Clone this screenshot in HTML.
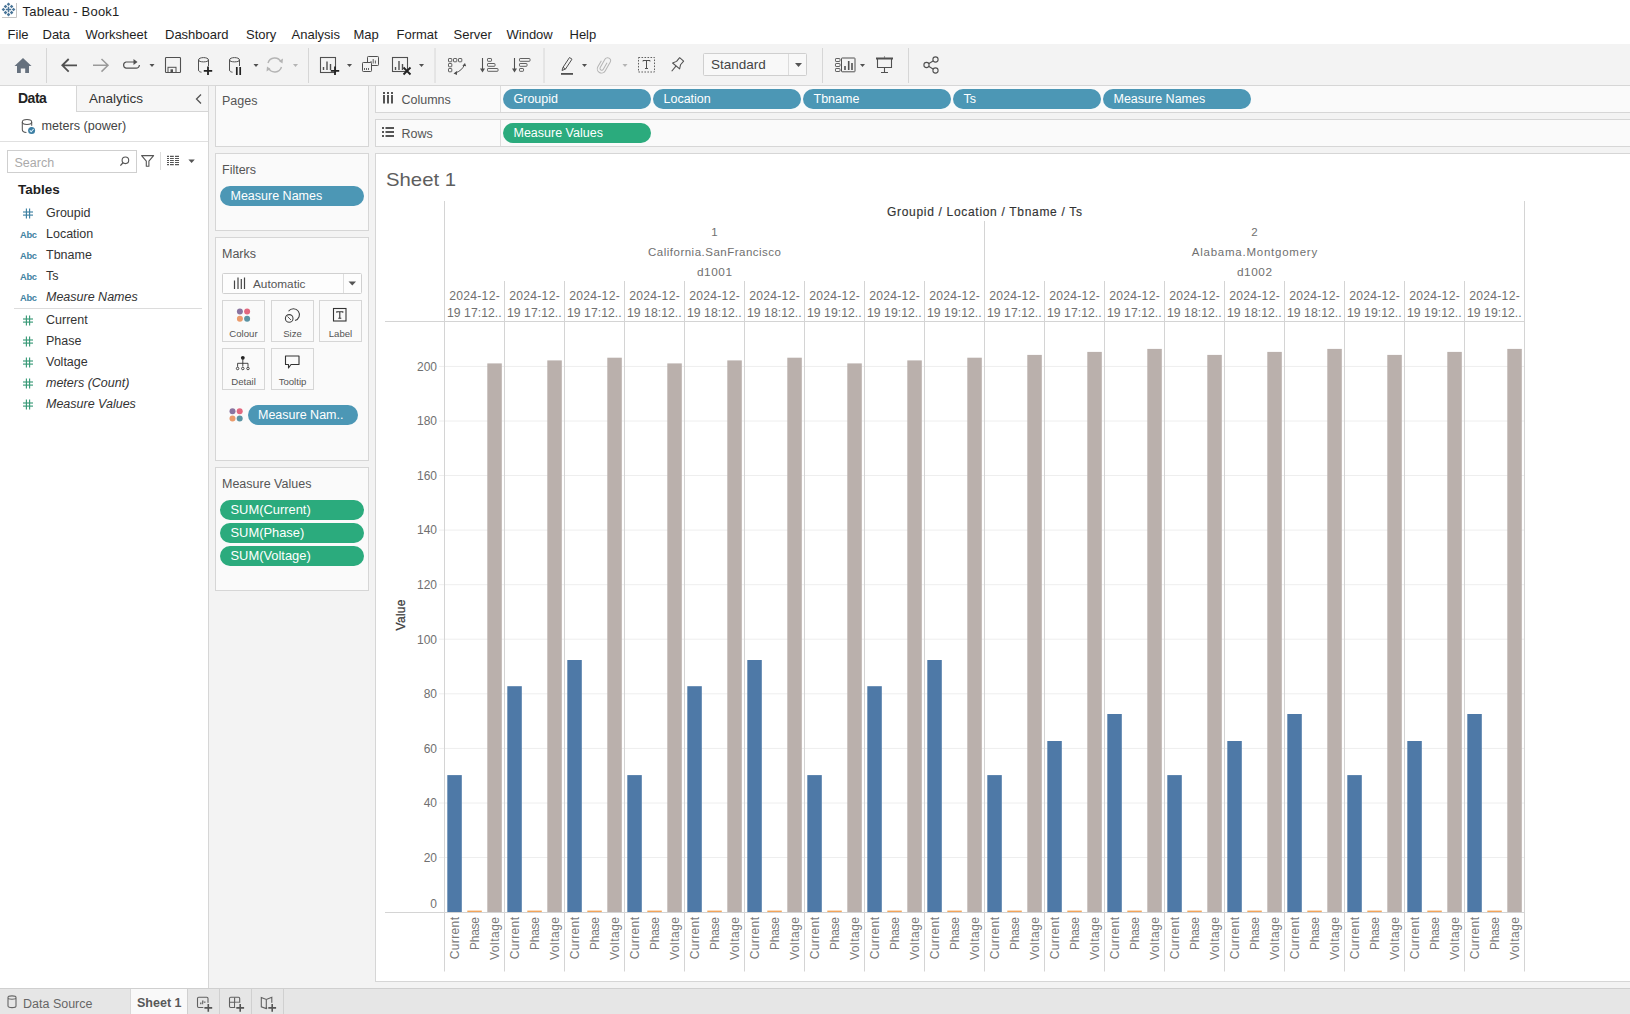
<!DOCTYPE html>
<html><head><meta charset="utf-8"><title>Tableau - Book1</title>
<style>
*{box-sizing:border-box;margin:0;padding:0}
html,body{width:1630px;height:1014px;overflow:hidden;background:#fff;font-family:"Liberation Sans", sans-serif;}
.abs{position:absolute}
.t{position:absolute;white-space:nowrap;line-height:1}
.card{position:absolute;background:#fafafa;border:1px solid #d6d6d6}
.pill{position:absolute;height:20px;border-radius:10px;color:#fff;font-size:12.5px;line-height:20px;padding-left:10.5px;white-space:nowrap;overflow:hidden}
.blue{background:#4c97b5}
.green{background:#2bab7d}
</style></head><body>

<div class="abs" style="left:0;top:0;width:1630px;height:44px;background:#fff"></div>
<svg class="abs" style="left:0;top:0" width="22" height="22" viewBox="0 0 22 22"><path d="M16.5 3 V17.5 H2" fill="none" stroke="#c4c4c4" stroke-width="1"/><path d="M6.7 4.3 L8.5 2.5 L10.3 4.3 L8.5 6.1 Z" fill="#4a7598"/><path d="M3.7 6.5 L5.5 4.7 L7.3 6.5 L5.5 8.3 Z" fill="#4a7598"/><path d="M9.799999999999999 6.5 L11.6 4.7 L13.4 6.5 L11.6 8.3 Z" fill="#4a7598"/><path d="M1.5999999999999999 9.5 L3.4 7.7 L5.2 9.5 L3.4 11.3 Z" fill="#4a7598"/><path d="M11.799999999999999 9.5 L13.6 7.7 L15.4 9.5 L13.6 11.3 Z" fill="#4a7598"/><path d="M3.7 12.6 L5.5 10.799999999999999 L7.3 12.6 L5.5 14.4 Z" fill="#4a7598"/><path d="M9.799999999999999 12.6 L11.6 10.799999999999999 L13.4 12.6 L11.6 14.4 Z" fill="#4a7598"/><path d="M6.7 14.6 L8.5 12.799999999999999 L10.3 14.6 L8.5 16.4 Z" fill="#4a7598"/><path d="M8.5 6.8 V12.2 M5.8 9.5 H11.2" stroke="#4a7598" stroke-width="1.5"/></svg>
<div class="t" style="left:22.5px;top:4.6px;font-size:13px;letter-spacing:0.2px;color:#1e1e1e">Tableau - Book1</div>
<div class="t" style="left:7.6px;top:27.5px;font-size:13px;color:#1e1e1e">File</div>
<div class="t" style="left:42.5px;top:27.5px;font-size:13px;color:#1e1e1e">Data</div>
<div class="t" style="left:85.5px;top:27.5px;font-size:13px;color:#1e1e1e">Worksheet</div>
<div class="t" style="left:165px;top:27.5px;font-size:13px;color:#1e1e1e">Dashboard</div>
<div class="t" style="left:246px;top:27.5px;font-size:13px;color:#1e1e1e">Story</div>
<div class="t" style="left:291.5px;top:27.5px;font-size:13px;color:#1e1e1e">Analysis</div>
<div class="t" style="left:353.5px;top:27.5px;font-size:13px;color:#1e1e1e">Map</div>
<div class="t" style="left:396.5px;top:27.5px;font-size:13px;color:#1e1e1e">Format</div>
<div class="t" style="left:453.6px;top:27.5px;font-size:13px;color:#1e1e1e">Server</div>
<div class="t" style="left:506.5px;top:27.5px;font-size:13px;color:#1e1e1e">Window</div>
<div class="t" style="left:569.5px;top:27.5px;font-size:13px;color:#1e1e1e">Help</div>
<div class="abs" style="left:0;top:44px;width:1630px;height:42px;background:#f3f3f3;border-bottom:1px solid #d8d8d8"></div>
<svg class="abs" style="left:0;top:0" width="1630" height="86" viewBox="0 0 1630 86">
<path d="M14.5 66 L23 58 L31.5 66 H29 V73 H25.2 V68.5 H20.8 V73 H17 V66 Z" fill="#66717e"/>
<line x1="46.5" y1="48" x2="46.5" y2="83" stroke="#d6d6d6" stroke-width="1"/>
<path d="M77 65.3 H62.8 M68.7 59 L62.3 65.3 L68.7 71.6" fill="none" stroke="#505050" stroke-width="1.8"/>
<path d="M93 65.3 H107.5 M101.5 59 L108 65.3 L101.5 71.6" fill="none" stroke="#9a9a9a" stroke-width="1.5"/>
<path d="M134 62 H126 A3.2 3.2 0 0 0 126 68.2 H136 A3.2 3.2 0 0 0 139.4 65" fill="none" stroke="#505050" stroke-width="1.2"/>
<path d="M133.5 59 L137.5 62 L133.5 65 Z" fill="#505050"/>
<path d="M149.5 64 H154.5 L152.0 67 Z" fill="#505050"/>
<rect x="165.5" y="57.5" width="15" height="15" rx="0.8" fill="none" stroke="#505050" stroke-width="1.1"/>
<rect x="168" y="67.3" width="8" height="5.2" fill="none" stroke="#505050" stroke-width="1"/>
<rect x="170.5" y="69.3" width="2.5" height="3" fill="#505050"/>
<path d="M198.5 60 C198.5 56.8 208.5 56.8 208.5 60 C208.5 62.5 198.5 62.5 198.5 60 Z M198.5 60 V70 C198.5 71.5 200.0 72 201.5 72.2 M208.5 60 V66" fill="none" stroke="#505050" stroke-width="1"/>
<path d="M208 66.5 V75 M203.8 70.8 H212.2" stroke="#222" stroke-width="1.8"/>
<path d="M229.5 60 C229.5 56.8 239.5 56.8 239.5 60 C239.5 62.5 229.5 62.5 229.5 60 Z M229.5 60 V70 C229.5 71.5 231.0 72 232.5 72.2 M239.5 60 V66" fill="none" stroke="#505050" stroke-width="1"/>
<path d="M236.8 67 V75 M240.2 67 V75" stroke="#222" stroke-width="1.7"/>
<path d="M253.5 64 H258.5 L256.0 67 Z" fill="#505050"/>
<path d="M268 63 A7 7 0 0 1 281 62 M281.5 67 A7 7 0 0 1 268.5 68" fill="none" stroke="#b4b4b4" stroke-width="1.4"/>
<path d="M279 61 L283 58.5 L282.5 63.5 Z M270.5 69 L266.5 71.5 L267 66.5 Z" fill="#b4b4b4"/>
<path d="M293 64 H298 L295.5 67 Z" fill="#b4b4b4"/>
<line x1="308.5" y1="48" x2="308.5" y2="83" stroke="#d6d6d6" stroke-width="1"/>
<rect x="320.5" y="57.5" width="15" height="15" fill="none" stroke="#505050" stroke-width="1.1"/>
<path d="M323.5 70 V67 M327 70 V61.5 M330.5 70 V64" stroke="#505050" stroke-width="1.4"/>
<path d="M335 66.5 V75 M330.8 70.8 H339.2" stroke="#222" stroke-width="1.8"/>
<path d="M347 64 H352 L349.5 67 Z" fill="#505050"/>
<rect x="367.5" y="56.5" width="11" height="9" rx="0.8" fill="#f3f3f3" stroke="#505050" stroke-width="1"/>
<path d="M371 63.5 V61 M373.2 63.5 V59 M375.4 63.5 V60.5" stroke="#505050" stroke-width="0.9"/>
<rect x="362.5" y="62.5" width="9" height="9" rx="0.8" fill="#f3f3f3" stroke="#505050" stroke-width="1"/>
<path d="M364.5 70 V68 M366.5 70 V68 M368.5 70 V68" stroke="#505050" stroke-width="0.9"/>
<rect x="392.5" y="57.5" width="15" height="14" fill="none" stroke="#505050" stroke-width="1.1"/>
<path d="M395.5 70 V67 M399 70 V61 M402.5 70 V64" stroke="#505050" stroke-width="1.4"/>
<path d="M403.5 67.5 L410.5 74.5 M410.5 67.5 L403.5 74.5" stroke="#222" stroke-width="1.8"/>
<path d="M419 64 H424 L421.5 67 Z" fill="#505050"/>
<line x1="435" y1="48" x2="435" y2="83" stroke="#d6d6d6" stroke-width="1"/>
<rect x="448.5" y="58.5" width="3.3" height="3.3" rx="0.6" fill="none" stroke="#505050" stroke-width="0.9"/>
<rect x="453.5" y="58.5" width="3.3" height="3.3" rx="0.6" fill="none" stroke="#505050" stroke-width="0.9"/>
<rect x="458.5" y="58.5" width="3.3" height="3.3" rx="0.6" fill="none" stroke="#505050" stroke-width="0.9"/>
<rect x="448.5" y="63.5" width="3.3" height="3.3" rx="0.6" fill="none" stroke="#505050" stroke-width="0.9"/>
<rect x="448.5" y="68.5" width="3.3" height="3.3" rx="0.6" fill="none" stroke="#505050" stroke-width="0.9"/>
<path d="M455 73 Q462 71 464.5 64.5" fill="none" stroke="#505050" stroke-width="1"/>
<path d="M453.5 73.5 L457 71 L457 75 Z M465 63 L462.3 65.8 L466.2 66.3 Z" fill="#505050"/>
<path d="M482.5 58 V71" stroke="#505050" stroke-width="1.1"/><path d="M480 68.5 H485 L482.5 72.5 Z" fill="#505050"/>
<rect x="487.5" y="58.5" width="4" height="2.8" rx="0.6" fill="none" stroke="#505050" stroke-width="0.9"/>
<rect x="487.5" y="63.5" width="7.5" height="2.8" rx="0.6" fill="none" stroke="#505050" stroke-width="0.9"/>
<rect x="487.5" y="68.5" width="10.5" height="2.8" rx="0.6" fill="none" stroke="#505050" stroke-width="0.9"/>
<path d="M514.5 58 V71" stroke="#505050" stroke-width="1.1"/><path d="M512 68.5 H517 L514.5 72.5 Z" fill="#505050"/>
<rect x="519.5" y="58.5" width="10.5" height="2.8" rx="0.6" fill="none" stroke="#505050" stroke-width="0.9"/>
<rect x="519.5" y="63.5" width="7.5" height="2.8" rx="0.6" fill="none" stroke="#505050" stroke-width="0.9"/>
<rect x="519.5" y="68.5" width="4" height="2.8" rx="0.6" fill="none" stroke="#505050" stroke-width="0.9"/>
<line x1="544" y1="48" x2="544" y2="83" stroke="#d6d6d6" stroke-width="1"/>
<path d="M569.5 57.5 L572 59.2 L565.5 69 L563 67.3 Z M563 67.3 L562 70.5 L565.5 69" fill="none" stroke="#505050" stroke-width="1"/>
<rect x="561" y="73" width="12" height="1.8" fill="#505050"/>
<path d="M582 64 H587 L584.5 67 Z" fill="#505050"/>
<g transform="translate(604,64.5) rotate(30)"><path d="M1.8 -3 V4.5 A1.8 1.8 0 0 1 -1.8 4.5 V-5 A3 3 0 0 1 4.2 -5 V5 A4.2 4.2 0 0 1 -4.2 5 V-2" fill="none" stroke="#b4b4b4" stroke-width="1"/></g>
<path d="M622.5 64 H627.5 L625.0 67 Z" fill="#b4b4b4"/>
<rect x="638.5" y="57.5" width="16" height="14.5" fill="none" stroke="#505050" stroke-width="0.9" stroke-dasharray="1.6 1.4"/>
<path d="M643 61.5 V60.5 H650 V61.5 M646.5 60.5 V68.5 M645 68.5 H648" fill="none" stroke="#505050" stroke-width="1"/>
<g transform="translate(676.5,65.5) rotate(40)"><path d="M-2.6 -8 H2.6 V-3.2 L4.6 0.6 H-4.6 L-2.6 -3.2 Z" fill="none" stroke="#505050" stroke-width="1.05" stroke-linejoin="round"/><path d="M0 0.6 V7.5" stroke="#505050" stroke-width="1.1"/></g>
<rect x="703.5" y="53.5" width="103" height="22" rx="1" fill="#f8f8f8" stroke="#cfcfcf"/>
<line x1="788.5" y1="54" x2="788.5" y2="75" stroke="#dcdcdc"/>
<path d="M795 63 H802 L798.5 67 Z" fill="#555"/>
<text x="711" y="69" font-family="Liberation Sans, sans-serif" font-size="13.5" fill="#444">Standard</text>
<line x1="822.5" y1="48" x2="822.5" y2="83" stroke="#d6d6d6" stroke-width="1"/>
<rect x="835.5" y="58.5" width="4.5" height="3" rx="0.6" fill="none" stroke="#505050" stroke-width="0.9"/>
<rect x="835.5" y="63.5" width="4.5" height="3" rx="0.6" fill="none" stroke="#505050" stroke-width="0.9"/>
<rect x="835.5" y="68.5" width="4.5" height="3" rx="0.6" fill="none" stroke="#505050" stroke-width="0.9"/>
<rect x="841.5" y="58" width="13.5" height="13.8" rx="0.6" fill="none" stroke="#505050" stroke-width="1"/>
<path d="M845 70 V66 M848.7 70 V61 M852 70 V63" stroke="#505050" stroke-width="1.6"/>
<path d="M860 64 H865 L862.5 67 Z" fill="#505050"/>
<rect x="876" y="57.5" width="17" height="2" fill="#505050"/>
<path d="M877.5 59 V67.5 H891.5 V59 M884.5 56.5 V57.5 M884.5 67.5 V72.5 M881 72.5 H888" fill="none" stroke="#505050" stroke-width="1.1"/>
<line x1="908.5" y1="48" x2="908.5" y2="83" stroke="#d6d6d6" stroke-width="1"/>
<path d="M926.5 65 L935.5 59.5 M926.5 65 L935.5 70.5" stroke="#505050" stroke-width="1.1"/>
<circle cx="935.5" cy="59.5" r="2.6" fill="#f3f3f3" stroke="#505050" stroke-width="1.1"/>
<circle cx="926.5" cy="65" r="2.6" fill="#f3f3f3" stroke="#505050" stroke-width="1.1"/>
<circle cx="935.5" cy="70.5" r="2.6" fill="#f3f3f3" stroke="#505050" stroke-width="1.1"/>
</svg>
<div class="abs" style="left:0;top:86px;width:209px;height:902px;background:#fff;border-right:1px solid #d6d6d6"></div>
<div class="abs" style="left:76px;top:86px;width:132px;height:26px;background:#f6f6f6;border-left:1px solid #d6d6d6;border-bottom:1px solid #d6d6d6"></div>
<div class="t" style="left:18px;top:91.3px;font-size:14px;letter-spacing:-0.5px;font-weight:bold;color:#222">Data</div>
<div class="t" style="left:89px;top:92px;font-size:13.5px;color:#333">Analytics</div>
<svg class="abs" style="left:193.5px;top:92.5px" width="10" height="12"><path d="M7 1.5 L2.5 6 L7 10.5" fill="none" stroke="#555" stroke-width="1.3"/></svg>
<svg class="abs" style="left:15px;top:112px" width="30" height="26" viewBox="15 112 30 26"><ellipse cx="27" cy="121.9" rx="4.7" ry="2.5" fill="none" stroke="#555" stroke-width="1.05"/><path d="M22.3 121.9 V129.6 Q22.3 132.3 26.4 132.6 M31.7 121.9 V125.8" fill="none" stroke="#555" stroke-width="1.05"/><circle cx="31.6" cy="130.4" r="3.5" fill="#3c7ea3"/><path d="M29.8 130.4 L31.2 131.8 L33.6 129" fill="none" stroke="#dff3ff" stroke-width="1.1"/></svg>
<div class="t" style="left:41.5px;top:120px;font-size:12.6px;color:#444">meters (power)</div>
<div class="abs" style="left:0;top:141px;width:208px;height:1px;background:#e0e0e0"></div>
<div class="abs" style="left:7px;top:150px;width:130px;height:22.5px;background:#fff;border:1px solid #cfcfcf"></div>
<div class="t" style="left:14.5px;top:156.5px;font-size:12.5px;color:#aaa">Search</div>
<svg class="abs" style="left:110px;top:148px" width="95" height="27" viewBox="110 148 95 27"><circle cx="125.4" cy="160.3" r="3.3" fill="none" stroke="#555" stroke-width="1.1"/><path d="M123 162.8 L120.4 165.6" stroke="#555" stroke-width="1.3"/><path d="M141.6 155.6 H153.6 L148.9 161.2 V166.3 H146.3 V161.2 Z" fill="none" stroke="#555" stroke-width="1.1" stroke-linejoin="round"/><line x1="160.5" y1="152" x2="160.5" y2="170" stroke="#ddd"/><path d="M167 156.40 H169 M170 156.40 H173.8 M175 156.40 H179" stroke="#555" stroke-width="1.1"/><path d="M167 158.45 H169 M170 158.45 H173.8 M175 158.45 H179" stroke="#555" stroke-width="1.1"/><path d="M167 160.50 H169 M170 160.50 H173.8 M175 160.50 H179" stroke="#555" stroke-width="1.1"/><path d="M167 162.55 H169 M170 162.55 H173.8 M175 162.55 H179" stroke="#555" stroke-width="1.1"/><path d="M167 164.60 H169 M170 164.60 H173.8 M175 164.60 H179" stroke="#555" stroke-width="1.1"/><path d="M188.4 159.4 H194.8 L191.6 162.9 Z" fill="#555"/></svg>
<div class="t" style="left:18px;top:183px;font-size:13.5px;font-weight:bold;color:#1e1e1e">Tables</div>
<svg class="abs" style="left:22px;top:207.9px" width="12" height="11"><g stroke="#3f82a2" stroke-width="1.15"><line x1="4.4" y1="0.5" x2="4.4" y2="10.5"/><line x1="7.6" y1="0.5" x2="7.6" y2="10.5"/><line x1="1" y1="4" x2="11" y2="4"/><line x1="1" y1="7.1" x2="11" y2="7.1"/></g></svg>
<div class="t" style="left:46px;top:206.9px;font-size:12.5px;color:#333;">Groupid</div>
<div class="t" style="left:20px;top:231.1px;font-size:9.3px;letter-spacing:-0.3px;font-weight:bold;color:#3f82a2">Abc</div>
<div class="t" style="left:46px;top:228.1px;font-size:12.5px;color:#333;">Location</div>
<div class="t" style="left:20px;top:252.2px;font-size:9.3px;letter-spacing:-0.3px;font-weight:bold;color:#3f82a2">Abc</div>
<div class="t" style="left:46px;top:249.2px;font-size:12.5px;color:#333;">Tbname</div>
<div class="t" style="left:20px;top:273.0px;font-size:9.3px;letter-spacing:-0.3px;font-weight:bold;color:#3f82a2">Abc</div>
<div class="t" style="left:46px;top:270.0px;font-size:12.5px;color:#333;">Ts</div>
<div class="t" style="left:20px;top:294.2px;font-size:9.3px;letter-spacing:-0.3px;font-weight:bold;color:#3f82a2">Abc</div>
<div class="t" style="left:46px;top:291.2px;font-size:12.5px;color:#333;font-style:italic;">Measure Names</div>
<svg class="abs" style="left:22px;top:315.2px" width="12" height="11"><g stroke="#3a9a78" stroke-width="1.15"><line x1="4.4" y1="0.5" x2="4.4" y2="10.5"/><line x1="7.6" y1="0.5" x2="7.6" y2="10.5"/><line x1="1" y1="4" x2="11" y2="4"/><line x1="1" y1="7.1" x2="11" y2="7.1"/></g></svg>
<div class="t" style="left:46px;top:314.2px;font-size:12.5px;color:#333;">Current</div>
<svg class="abs" style="left:22px;top:336.2px" width="12" height="11"><g stroke="#3a9a78" stroke-width="1.15"><line x1="4.4" y1="0.5" x2="4.4" y2="10.5"/><line x1="7.6" y1="0.5" x2="7.6" y2="10.5"/><line x1="1" y1="4" x2="11" y2="4"/><line x1="1" y1="7.1" x2="11" y2="7.1"/></g></svg>
<div class="t" style="left:46px;top:335.2px;font-size:12.5px;color:#333;">Phase</div>
<svg class="abs" style="left:22px;top:357.2px" width="12" height="11"><g stroke="#3a9a78" stroke-width="1.15"><line x1="4.4" y1="0.5" x2="4.4" y2="10.5"/><line x1="7.6" y1="0.5" x2="7.6" y2="10.5"/><line x1="1" y1="4" x2="11" y2="4"/><line x1="1" y1="7.1" x2="11" y2="7.1"/></g></svg>
<div class="t" style="left:46px;top:356.2px;font-size:12.5px;color:#333;">Voltage</div>
<svg class="abs" style="left:22px;top:378.2px" width="12" height="11"><g stroke="#3a9a78" stroke-width="1.15"><line x1="4.4" y1="0.5" x2="4.4" y2="10.5"/><line x1="7.6" y1="0.5" x2="7.6" y2="10.5"/><line x1="1" y1="4" x2="11" y2="4"/><line x1="1" y1="7.1" x2="11" y2="7.1"/></g></svg>
<div class="t" style="left:46px;top:377.2px;font-size:12.5px;color:#333;font-style:italic;">meters (Count)</div>
<svg class="abs" style="left:22px;top:399.2px" width="12" height="11"><g stroke="#3a9a78" stroke-width="1.15"><line x1="4.4" y1="0.5" x2="4.4" y2="10.5"/><line x1="7.6" y1="0.5" x2="7.6" y2="10.5"/><line x1="1" y1="4" x2="11" y2="4"/><line x1="1" y1="7.1" x2="11" y2="7.1"/></g></svg>
<div class="t" style="left:46px;top:398.2px;font-size:12.5px;color:#333;font-style:italic;">Measure Values</div>
<div class="abs" style="left:14px;top:308px;width:188px;height:1px;background:#dcdcdc"></div>
<div class="abs" style="left:209px;top:86px;width:1421px;height:902px;background:#f3f3f3"></div>
<div class="card" style="left:215px;top:85px;width:154px;height:62px"></div>
<div class="t" style="left:222px;top:95px;font-size:12.5px;color:#555">Pages</div>
<div class="card" style="left:215px;top:153px;width:154px;height:78px"></div>
<div class="t" style="left:222px;top:164px;font-size:12.5px;color:#555">Filters</div>
<div class="pill blue" style="left:220px;top:186px;width:144px">Measure Names</div>
<div class="card" style="left:215px;top:237px;width:154px;height:224px"></div>
<div class="t" style="left:222px;top:248px;font-size:12.5px;color:#555">Marks</div>
<div class="card" style="left:215px;top:467px;width:154px;height:124px"></div>
<div class="t" style="left:222px;top:477.7px;font-size:12.5px;color:#555">Measure Values</div>
<div class="pill green" style="left:220px;top:500px;width:144px;font-size:12.9px">SUM(Current)</div>
<div class="pill green" style="left:220px;top:523px;width:144px;font-size:12.9px">SUM(Phase)</div>
<div class="pill green" style="left:220px;top:546px;width:144px;font-size:12.9px">SUM(Voltage)</div>
<svg class="abs" style="left:0;top:0" width="380" height="600" viewBox="0 0 380 600">
<rect x="222.5" y="273.5" width="139" height="20" rx="1" fill="#fdfdfd" stroke="#d0d0d0"/>
<line x1="343.5" y1="274" x2="343.5" y2="293" stroke="#dedede"/>
<path d="M348.5 281.5 H356 L352.25 285.5 Z" fill="#555"/>
<path d="M234.5 280.5 V289 M238 277.5 V289 M241.3 279 V289 M244.5 277.5 V289" stroke="#444" stroke-width="1.2"/>
<text x="253" y="288" font-family="Liberation Sans, sans-serif" font-size="11.8" fill="#555">Automatic</text>
<rect x="222.5" y="300.5" width="42" height="41" fill="#fafafa" stroke="#d6d6d6"/>
<text x="243.5" y="336.5" font-family="Liberation Sans, sans-serif" font-size="9.6" fill="#555" text-anchor="middle">Colour</text>
<rect x="271.5" y="300.5" width="42" height="41" fill="#fafafa" stroke="#d6d6d6"/>
<text x="292.5" y="336.5" font-family="Liberation Sans, sans-serif" font-size="9.6" fill="#555" text-anchor="middle">Size</text>
<rect x="319.5" y="300.5" width="42" height="41" fill="#fafafa" stroke="#d6d6d6"/>
<text x="340.5" y="336.5" font-family="Liberation Sans, sans-serif" font-size="9.6" fill="#555" text-anchor="middle">Label</text>
<rect x="222.5" y="348.5" width="42" height="41" fill="#fafafa" stroke="#d6d6d6"/>
<text x="243.5" y="384.5" font-family="Liberation Sans, sans-serif" font-size="9.6" fill="#555" text-anchor="middle">Detail</text>
<rect x="271.5" y="348.5" width="42" height="41" fill="#fafafa" stroke="#d6d6d6"/>
<text x="292.5" y="384.5" font-family="Liberation Sans, sans-serif" font-size="9.6" fill="#555" text-anchor="middle">Tooltip</text>
<circle cx="239.9" cy="311.59999999999997" r="3" fill="#8a74a0"/><circle cx="247.1" cy="311.59999999999997" r="3" fill="#e2687f"/>
<circle cx="239.9" cy="318.8" r="3" fill="#eb9b6c"/><circle cx="247.1" cy="318.8" r="3" fill="#5a93a3"/>
<path d="M288.5 311.3 A6 6 0 1 1 295 320.5" fill="none" stroke="#444" stroke-width="1.1"/>
<circle cx="289.2" cy="318.4" r="3.8" fill="none" stroke="#444" stroke-width="1.1"/><path d="M287.5 316.5 L291 320" stroke="#444" stroke-width="0.9"/>
<rect x="333.5" y="308.5" width="12.5" height="12.5" fill="none" stroke="#333" stroke-width="1.1"/>
<path d="M336.8 312.7 V311.8 H342.8 V312.7 M339.8 311.8 V318.2 M338.3 318.2 H341.3" fill="none" stroke="#333" stroke-width="1.1"/>
<circle cx="242.8" cy="357.8" r="1.9" fill="#222"/>
<path d="M242.8 358 V366.5 M237.6 366.8 V363.3 H248 V366.8" fill="none" stroke="#333" stroke-width="0.9"/>
<circle cx="237.6" cy="368.5" r="1.25" fill="none" stroke="#333" stroke-width="0.9"/>
<circle cx="242.8" cy="368.5" r="1.25" fill="none" stroke="#333" stroke-width="0.9"/>
<circle cx="248" cy="368.5" r="1.25" fill="none" stroke="#333" stroke-width="0.9"/>
<path d="M285.5 356 H299 V364.5 H291 L288.5 368 V364.5 H285.5 Z" fill="none" stroke="#333" stroke-width="1.1" stroke-linejoin="round"/>
<circle cx="232.5" cy="411.29999999999995" r="3" fill="#8a74a0"/><circle cx="239.7" cy="411.29999999999995" r="3" fill="#e2687f"/>
<circle cx="232.5" cy="418.5" r="3" fill="#eb9b6c"/><circle cx="239.7" cy="418.5" r="3" fill="#5a93a3"/>
</svg>
<div class="pill blue" style="left:247.5px;top:405px;width:110.5px">Measure Nam..</div>
<div class="card" style="left:375px;top:85px;width:1260px;height:28px;background:#fafafa"></div>
<div class="abs" style="left:500px;top:86px;width:1px;height:26px;background:#dcdcdc"></div>
<div class="t" style="left:401.5px;top:93.6px;font-size:12.5px;color:#555">Columns</div>
<div class="card" style="left:375px;top:119px;width:1260px;height:28px;background:#fafafa"></div>
<div class="abs" style="left:500px;top:120px;width:1px;height:26px;background:#dcdcdc"></div>
<div class="t" style="left:401.5px;top:128px;font-size:12.5px;color:#555">Rows</div>
<div class="pill blue" style="left:503px;top:89px;width:148px">Groupid</div>
<div class="pill blue" style="left:653px;top:89px;width:148px">Location</div>
<div class="pill blue" style="left:803px;top:89px;width:148px">Tbname</div>
<div class="pill blue" style="left:953px;top:89px;width:148px">Ts</div>
<div class="pill blue" style="left:1103px;top:89px;width:148px">Measure Names</div>
<div class="pill green" style="left:503px;top:123px;width:148px">Measure Values</div>
<svg class="abs" style="left:380px;top:90px" width="16" height="50"><g fill="#555"><rect x="3" y="5" width="2" height="8.5"/><rect x="7" y="5" width="2" height="8.5"/><rect x="11" y="5" width="2" height="8.5"/><rect x="3" y="2" width="2" height="2"/><rect x="7" y="2" width="2" height="2"/><rect x="11" y="2" width="2" height="2"/></g><g fill="#555"><rect x="2" y="37" width="2" height="2"/><rect x="2" y="41" width="2" height="2"/><rect x="2" y="45" width="2" height="2"/><rect x="5.5" y="37" width="8.5" height="2"/><rect x="5.5" y="41" width="8.5" height="2"/><rect x="5.5" y="45" width="8.5" height="2"/></g></svg>
<div class="abs" style="left:375px;top:153px;width:1260px;height:829px;background:#fff;border:1px solid #d6d6d6"></div>
<div class="abs" style="left:376px;top:982px;width:1254px;height:6px;background:#f3f3f3"></div>
<svg class="abs" style="left:0;top:0" width="1630" height="1014" viewBox="0 0 1630 1014">
<g font-family="Liberation Sans, sans-serif">
<text x="386" y="186" font-size="19" fill="#5e5e5e" textLength="70" lengthAdjust="spacingAndGlyphs">Sheet 1</text>
<line x1="439" y1="857.5" x2="1524.5" y2="857.5" stroke="#eeeeee" stroke-width="1"/>
<line x1="439" y1="803.0" x2="1524.5" y2="803.0" stroke="#eeeeee" stroke-width="1"/>
<line x1="439" y1="748.4" x2="1524.5" y2="748.4" stroke="#eeeeee" stroke-width="1"/>
<line x1="439" y1="693.8" x2="1524.5" y2="693.8" stroke="#eeeeee" stroke-width="1"/>
<line x1="439" y1="639.2" x2="1524.5" y2="639.2" stroke="#eeeeee" stroke-width="1"/>
<line x1="439" y1="584.7" x2="1524.5" y2="584.7" stroke="#eeeeee" stroke-width="1"/>
<line x1="439" y1="530.1" x2="1524.5" y2="530.1" stroke="#eeeeee" stroke-width="1"/>
<line x1="439" y1="475.5" x2="1524.5" y2="475.5" stroke="#eeeeee" stroke-width="1"/>
<line x1="439" y1="421.0" x2="1524.5" y2="421.0" stroke="#eeeeee" stroke-width="1"/>
<line x1="439" y1="366.4" x2="1524.5" y2="366.4" stroke="#eeeeee" stroke-width="1"/>
<rect x="447.3" y="775.1" width="14.5" height="137.0" fill="#4e79a7"/>
<rect x="467.3" y="910.6" width="14.5" height="1.5" fill="#f3a55a"/>
<rect x="487.3" y="363.4" width="14.5" height="548.7" fill="#bab0ac"/>
<rect x="507.3" y="686.2" width="14.5" height="225.9" fill="#4e79a7"/>
<rect x="527.3" y="910.6" width="14.5" height="1.5" fill="#f3a55a"/>
<rect x="547.3" y="360.4" width="14.5" height="551.7" fill="#bab0ac"/>
<rect x="567.3" y="660.0" width="14.5" height="252.1" fill="#4e79a7"/>
<rect x="587.3" y="910.6" width="14.5" height="1.5" fill="#f3a55a"/>
<rect x="607.3" y="357.7" width="14.5" height="554.4" fill="#bab0ac"/>
<rect x="627.3" y="775.1" width="14.5" height="137.0" fill="#4e79a7"/>
<rect x="647.3" y="910.6" width="14.5" height="1.5" fill="#f3a55a"/>
<rect x="667.3" y="363.4" width="14.5" height="548.7" fill="#bab0ac"/>
<rect x="687.3" y="686.2" width="14.5" height="225.9" fill="#4e79a7"/>
<rect x="707.3" y="910.6" width="14.5" height="1.5" fill="#f3a55a"/>
<rect x="727.3" y="360.4" width="14.5" height="551.7" fill="#bab0ac"/>
<rect x="747.3" y="660.0" width="14.5" height="252.1" fill="#4e79a7"/>
<rect x="767.3" y="910.6" width="14.5" height="1.5" fill="#f3a55a"/>
<rect x="787.3" y="357.7" width="14.5" height="554.4" fill="#bab0ac"/>
<rect x="807.3" y="775.1" width="14.5" height="137.0" fill="#4e79a7"/>
<rect x="827.3" y="910.6" width="14.5" height="1.5" fill="#f3a55a"/>
<rect x="847.3" y="363.4" width="14.5" height="548.7" fill="#bab0ac"/>
<rect x="867.3" y="686.2" width="14.5" height="225.9" fill="#4e79a7"/>
<rect x="887.3" y="910.6" width="14.5" height="1.5" fill="#f3a55a"/>
<rect x="907.3" y="360.4" width="14.5" height="551.7" fill="#bab0ac"/>
<rect x="927.3" y="660.0" width="14.5" height="252.1" fill="#4e79a7"/>
<rect x="947.3" y="910.6" width="14.5" height="1.5" fill="#f3a55a"/>
<rect x="967.3" y="357.7" width="14.5" height="554.4" fill="#bab0ac"/>
<rect x="987.3" y="775.1" width="14.5" height="137.0" fill="#4e79a7"/>
<rect x="1007.3" y="910.6" width="14.5" height="1.5" fill="#f3a55a"/>
<rect x="1027.3" y="354.9" width="14.5" height="557.2" fill="#bab0ac"/>
<rect x="1047.3" y="741.0" width="14.5" height="171.1" fill="#4e79a7"/>
<rect x="1067.3" y="910.6" width="14.5" height="1.5" fill="#f3a55a"/>
<rect x="1087.3" y="351.9" width="14.5" height="560.2" fill="#bab0ac"/>
<rect x="1107.3" y="714.0" width="14.5" height="198.1" fill="#4e79a7"/>
<rect x="1127.3" y="910.6" width="14.5" height="1.5" fill="#f3a55a"/>
<rect x="1147.3" y="348.9" width="14.5" height="563.2" fill="#bab0ac"/>
<rect x="1167.3" y="775.1" width="14.5" height="137.0" fill="#4e79a7"/>
<rect x="1187.3" y="910.6" width="14.5" height="1.5" fill="#f3a55a"/>
<rect x="1207.3" y="354.9" width="14.5" height="557.2" fill="#bab0ac"/>
<rect x="1227.3" y="741.0" width="14.5" height="171.1" fill="#4e79a7"/>
<rect x="1247.3" y="910.6" width="14.5" height="1.5" fill="#f3a55a"/>
<rect x="1267.3" y="351.9" width="14.5" height="560.2" fill="#bab0ac"/>
<rect x="1287.3" y="714.0" width="14.5" height="198.1" fill="#4e79a7"/>
<rect x="1307.3" y="910.6" width="14.5" height="1.5" fill="#f3a55a"/>
<rect x="1327.3" y="348.9" width="14.5" height="563.2" fill="#bab0ac"/>
<rect x="1347.3" y="775.1" width="14.5" height="137.0" fill="#4e79a7"/>
<rect x="1367.3" y="910.6" width="14.5" height="1.5" fill="#f3a55a"/>
<rect x="1387.3" y="354.9" width="14.5" height="557.2" fill="#bab0ac"/>
<rect x="1407.3" y="741.0" width="14.5" height="171.1" fill="#4e79a7"/>
<rect x="1427.3" y="910.6" width="14.5" height="1.5" fill="#f3a55a"/>
<rect x="1447.3" y="351.9" width="14.5" height="560.2" fill="#bab0ac"/>
<rect x="1467.3" y="714.0" width="14.5" height="198.1" fill="#4e79a7"/>
<rect x="1487.3" y="910.6" width="14.5" height="1.5" fill="#f3a55a"/>
<rect x="1507.3" y="348.9" width="14.5" height="563.2" fill="#bab0ac"/>
<line x1="444.5" y1="201" x2="444.5" y2="971.5" stroke="#d4d4d4" stroke-width="1"/>
<line x1="504.5" y1="281" x2="504.5" y2="971.5" stroke="#d4d4d4" stroke-width="1"/>
<line x1="564.5" y1="281" x2="564.5" y2="971.5" stroke="#d4d4d4" stroke-width="1"/>
<line x1="624.5" y1="281" x2="624.5" y2="971.5" stroke="#d4d4d4" stroke-width="1"/>
<line x1="684.5" y1="281" x2="684.5" y2="971.5" stroke="#d4d4d4" stroke-width="1"/>
<line x1="744.5" y1="281" x2="744.5" y2="971.5" stroke="#d4d4d4" stroke-width="1"/>
<line x1="804.5" y1="281" x2="804.5" y2="971.5" stroke="#d4d4d4" stroke-width="1"/>
<line x1="864.5" y1="281" x2="864.5" y2="971.5" stroke="#d4d4d4" stroke-width="1"/>
<line x1="924.5" y1="281" x2="924.5" y2="971.5" stroke="#d4d4d4" stroke-width="1"/>
<line x1="984.5" y1="221" x2="984.5" y2="971.5" stroke="#d4d4d4" stroke-width="1"/>
<line x1="1044.5" y1="281" x2="1044.5" y2="971.5" stroke="#d4d4d4" stroke-width="1"/>
<line x1="1104.5" y1="281" x2="1104.5" y2="971.5" stroke="#d4d4d4" stroke-width="1"/>
<line x1="1164.5" y1="281" x2="1164.5" y2="971.5" stroke="#d4d4d4" stroke-width="1"/>
<line x1="1224.5" y1="281" x2="1224.5" y2="971.5" stroke="#d4d4d4" stroke-width="1"/>
<line x1="1284.5" y1="281" x2="1284.5" y2="971.5" stroke="#d4d4d4" stroke-width="1"/>
<line x1="1344.5" y1="281" x2="1344.5" y2="971.5" stroke="#d4d4d4" stroke-width="1"/>
<line x1="1404.5" y1="281" x2="1404.5" y2="971.5" stroke="#d4d4d4" stroke-width="1"/>
<line x1="1464.5" y1="281" x2="1464.5" y2="971.5" stroke="#d4d4d4" stroke-width="1"/>
<line x1="1524.5" y1="201" x2="1524.5" y2="971.5" stroke="#d4d4d4" stroke-width="1"/>
<line x1="385" y1="321.5" x2="1524.5" y2="321.5" stroke="#d4d4d4" stroke-width="1"/>
<line x1="385" y1="912.5" x2="1524.5" y2="912.5" stroke="#d4d4d4" stroke-width="1"/>
<text x="437" y="907.7" font-size="12" fill="#707070" text-anchor="end">0</text>
<text x="437" y="861.7" font-size="12" fill="#707070" text-anchor="end">20</text>
<text x="437" y="807.2" font-size="12" fill="#707070" text-anchor="end">40</text>
<text x="437" y="752.6" font-size="12" fill="#707070" text-anchor="end">60</text>
<text x="437" y="698.0" font-size="12" fill="#707070" text-anchor="end">80</text>
<text x="437" y="643.5" font-size="12" fill="#707070" text-anchor="end">100</text>
<text x="437" y="588.9" font-size="12" fill="#707070" text-anchor="end">120</text>
<text x="437" y="534.3" font-size="12" fill="#707070" text-anchor="end">140</text>
<text x="437" y="479.7" font-size="12" fill="#707070" text-anchor="end">160</text>
<text x="437" y="425.2" font-size="12" fill="#707070" text-anchor="end">180</text>
<text x="437" y="370.6" font-size="12" fill="#707070" text-anchor="end">200</text>
<text transform="translate(405.4,615) rotate(-90)" font-size="12" fill="#3a3a3a" stroke="#3a3a3a" stroke-width="0.25" text-anchor="middle" textLength="31" lengthAdjust="spacing">Value</text>
<text x="984.5" y="216" font-size="12" fill="#333" stroke="#333" stroke-width="0.15" text-anchor="middle" textLength="195" lengthAdjust="spacing">Groupid / Location / Tbname / Ts</text>
<text x="714.5" y="236" font-size="11.5" fill="#707070" text-anchor="middle">1</text>
<text x="714.5" y="256" font-size="11.5" fill="#707070" text-anchor="middle" textLength="133" lengthAdjust="spacing">California.SanFrancisco</text>
<text x="714.5" y="276" font-size="11.8" fill="#707070" text-anchor="middle" textLength="35" lengthAdjust="spacing">d1001</text>
<text x="1254.5" y="236" font-size="11.5" fill="#707070" text-anchor="middle">2</text>
<text x="1254.5" y="256" font-size="11.5" fill="#707070" text-anchor="middle" textLength="125.3" lengthAdjust="spacing">Alabama.Montgomery</text>
<text x="1254.5" y="276" font-size="11.8" fill="#707070" text-anchor="middle" textLength="35" lengthAdjust="spacing">d1002</text>
<text x="474.5" y="300.2" font-size="12.2" fill="#707070" text-anchor="middle" textLength="50.4" lengthAdjust="spacing">2024-12-</text>
<text x="474.3" y="316.8" font-size="12.2" fill="#707070" text-anchor="middle" textLength="54.8" lengthAdjust="spacing">19 17:12..</text>
<text x="534.5" y="300.2" font-size="12.2" fill="#707070" text-anchor="middle" textLength="50.4" lengthAdjust="spacing">2024-12-</text>
<text x="534.3" y="316.8" font-size="12.2" fill="#707070" text-anchor="middle" textLength="54.8" lengthAdjust="spacing">19 17:12..</text>
<text x="594.5" y="300.2" font-size="12.2" fill="#707070" text-anchor="middle" textLength="50.4" lengthAdjust="spacing">2024-12-</text>
<text x="594.3" y="316.8" font-size="12.2" fill="#707070" text-anchor="middle" textLength="54.8" lengthAdjust="spacing">19 17:12..</text>
<text x="654.5" y="300.2" font-size="12.2" fill="#707070" text-anchor="middle" textLength="50.4" lengthAdjust="spacing">2024-12-</text>
<text x="654.3" y="316.8" font-size="12.2" fill="#707070" text-anchor="middle" textLength="54.8" lengthAdjust="spacing">19 18:12..</text>
<text x="714.5" y="300.2" font-size="12.2" fill="#707070" text-anchor="middle" textLength="50.4" lengthAdjust="spacing">2024-12-</text>
<text x="714.3" y="316.8" font-size="12.2" fill="#707070" text-anchor="middle" textLength="54.8" lengthAdjust="spacing">19 18:12..</text>
<text x="774.5" y="300.2" font-size="12.2" fill="#707070" text-anchor="middle" textLength="50.4" lengthAdjust="spacing">2024-12-</text>
<text x="774.3" y="316.8" font-size="12.2" fill="#707070" text-anchor="middle" textLength="54.8" lengthAdjust="spacing">19 18:12..</text>
<text x="834.5" y="300.2" font-size="12.2" fill="#707070" text-anchor="middle" textLength="50.4" lengthAdjust="spacing">2024-12-</text>
<text x="834.3" y="316.8" font-size="12.2" fill="#707070" text-anchor="middle" textLength="54.8" lengthAdjust="spacing">19 19:12..</text>
<text x="894.5" y="300.2" font-size="12.2" fill="#707070" text-anchor="middle" textLength="50.4" lengthAdjust="spacing">2024-12-</text>
<text x="894.3" y="316.8" font-size="12.2" fill="#707070" text-anchor="middle" textLength="54.8" lengthAdjust="spacing">19 19:12..</text>
<text x="954.5" y="300.2" font-size="12.2" fill="#707070" text-anchor="middle" textLength="50.4" lengthAdjust="spacing">2024-12-</text>
<text x="954.3" y="316.8" font-size="12.2" fill="#707070" text-anchor="middle" textLength="54.8" lengthAdjust="spacing">19 19:12..</text>
<text x="1014.5" y="300.2" font-size="12.2" fill="#707070" text-anchor="middle" textLength="50.4" lengthAdjust="spacing">2024-12-</text>
<text x="1014.3" y="316.8" font-size="12.2" fill="#707070" text-anchor="middle" textLength="54.8" lengthAdjust="spacing">19 17:12..</text>
<text x="1074.5" y="300.2" font-size="12.2" fill="#707070" text-anchor="middle" textLength="50.4" lengthAdjust="spacing">2024-12-</text>
<text x="1074.3" y="316.8" font-size="12.2" fill="#707070" text-anchor="middle" textLength="54.8" lengthAdjust="spacing">19 17:12..</text>
<text x="1134.5" y="300.2" font-size="12.2" fill="#707070" text-anchor="middle" textLength="50.4" lengthAdjust="spacing">2024-12-</text>
<text x="1134.3" y="316.8" font-size="12.2" fill="#707070" text-anchor="middle" textLength="54.8" lengthAdjust="spacing">19 17:12..</text>
<text x="1194.5" y="300.2" font-size="12.2" fill="#707070" text-anchor="middle" textLength="50.4" lengthAdjust="spacing">2024-12-</text>
<text x="1194.3" y="316.8" font-size="12.2" fill="#707070" text-anchor="middle" textLength="54.8" lengthAdjust="spacing">19 18:12..</text>
<text x="1254.5" y="300.2" font-size="12.2" fill="#707070" text-anchor="middle" textLength="50.4" lengthAdjust="spacing">2024-12-</text>
<text x="1254.3" y="316.8" font-size="12.2" fill="#707070" text-anchor="middle" textLength="54.8" lengthAdjust="spacing">19 18:12..</text>
<text x="1314.5" y="300.2" font-size="12.2" fill="#707070" text-anchor="middle" textLength="50.4" lengthAdjust="spacing">2024-12-</text>
<text x="1314.3" y="316.8" font-size="12.2" fill="#707070" text-anchor="middle" textLength="54.8" lengthAdjust="spacing">19 18:12..</text>
<text x="1374.5" y="300.2" font-size="12.2" fill="#707070" text-anchor="middle" textLength="50.4" lengthAdjust="spacing">2024-12-</text>
<text x="1374.3" y="316.8" font-size="12.2" fill="#707070" text-anchor="middle" textLength="54.8" lengthAdjust="spacing">19 19:12..</text>
<text x="1434.5" y="300.2" font-size="12.2" fill="#707070" text-anchor="middle" textLength="50.4" lengthAdjust="spacing">2024-12-</text>
<text x="1434.3" y="316.8" font-size="12.2" fill="#707070" text-anchor="middle" textLength="54.8" lengthAdjust="spacing">19 19:12..</text>
<text x="1494.5" y="300.2" font-size="12.2" fill="#707070" text-anchor="middle" textLength="50.4" lengthAdjust="spacing">2024-12-</text>
<text x="1494.3" y="316.8" font-size="12.2" fill="#707070" text-anchor="middle" textLength="54.8" lengthAdjust="spacing">19 19:12..</text>
<text transform="translate(459.1,917) rotate(-90)" font-size="12" fill="#777" text-anchor="end" textLength="42.3" lengthAdjust="spacing">Current</text>
<text transform="translate(479.1,917) rotate(-90)" font-size="12" fill="#777" text-anchor="end" textLength="33" lengthAdjust="spacing">Phase</text>
<text transform="translate(499.1,917) rotate(-90)" font-size="12" fill="#777" text-anchor="end" textLength="43" lengthAdjust="spacing">Voltage</text>
<text transform="translate(519.1,917) rotate(-90)" font-size="12" fill="#777" text-anchor="end" textLength="42.3" lengthAdjust="spacing">Current</text>
<text transform="translate(539.1,917) rotate(-90)" font-size="12" fill="#777" text-anchor="end" textLength="33" lengthAdjust="spacing">Phase</text>
<text transform="translate(559.1,917) rotate(-90)" font-size="12" fill="#777" text-anchor="end" textLength="43" lengthAdjust="spacing">Voltage</text>
<text transform="translate(579.1,917) rotate(-90)" font-size="12" fill="#777" text-anchor="end" textLength="42.3" lengthAdjust="spacing">Current</text>
<text transform="translate(599.1,917) rotate(-90)" font-size="12" fill="#777" text-anchor="end" textLength="33" lengthAdjust="spacing">Phase</text>
<text transform="translate(619.1,917) rotate(-90)" font-size="12" fill="#777" text-anchor="end" textLength="43" lengthAdjust="spacing">Voltage</text>
<text transform="translate(639.1,917) rotate(-90)" font-size="12" fill="#777" text-anchor="end" textLength="42.3" lengthAdjust="spacing">Current</text>
<text transform="translate(659.1,917) rotate(-90)" font-size="12" fill="#777" text-anchor="end" textLength="33" lengthAdjust="spacing">Phase</text>
<text transform="translate(679.1,917) rotate(-90)" font-size="12" fill="#777" text-anchor="end" textLength="43" lengthAdjust="spacing">Voltage</text>
<text transform="translate(699.1,917) rotate(-90)" font-size="12" fill="#777" text-anchor="end" textLength="42.3" lengthAdjust="spacing">Current</text>
<text transform="translate(719.1,917) rotate(-90)" font-size="12" fill="#777" text-anchor="end" textLength="33" lengthAdjust="spacing">Phase</text>
<text transform="translate(739.1,917) rotate(-90)" font-size="12" fill="#777" text-anchor="end" textLength="43" lengthAdjust="spacing">Voltage</text>
<text transform="translate(759.1,917) rotate(-90)" font-size="12" fill="#777" text-anchor="end" textLength="42.3" lengthAdjust="spacing">Current</text>
<text transform="translate(779.1,917) rotate(-90)" font-size="12" fill="#777" text-anchor="end" textLength="33" lengthAdjust="spacing">Phase</text>
<text transform="translate(799.1,917) rotate(-90)" font-size="12" fill="#777" text-anchor="end" textLength="43" lengthAdjust="spacing">Voltage</text>
<text transform="translate(819.1,917) rotate(-90)" font-size="12" fill="#777" text-anchor="end" textLength="42.3" lengthAdjust="spacing">Current</text>
<text transform="translate(839.1,917) rotate(-90)" font-size="12" fill="#777" text-anchor="end" textLength="33" lengthAdjust="spacing">Phase</text>
<text transform="translate(859.1,917) rotate(-90)" font-size="12" fill="#777" text-anchor="end" textLength="43" lengthAdjust="spacing">Voltage</text>
<text transform="translate(879.1,917) rotate(-90)" font-size="12" fill="#777" text-anchor="end" textLength="42.3" lengthAdjust="spacing">Current</text>
<text transform="translate(899.1,917) rotate(-90)" font-size="12" fill="#777" text-anchor="end" textLength="33" lengthAdjust="spacing">Phase</text>
<text transform="translate(919.1,917) rotate(-90)" font-size="12" fill="#777" text-anchor="end" textLength="43" lengthAdjust="spacing">Voltage</text>
<text transform="translate(939.1,917) rotate(-90)" font-size="12" fill="#777" text-anchor="end" textLength="42.3" lengthAdjust="spacing">Current</text>
<text transform="translate(959.1,917) rotate(-90)" font-size="12" fill="#777" text-anchor="end" textLength="33" lengthAdjust="spacing">Phase</text>
<text transform="translate(979.1,917) rotate(-90)" font-size="12" fill="#777" text-anchor="end" textLength="43" lengthAdjust="spacing">Voltage</text>
<text transform="translate(999.1,917) rotate(-90)" font-size="12" fill="#777" text-anchor="end" textLength="42.3" lengthAdjust="spacing">Current</text>
<text transform="translate(1019.1,917) rotate(-90)" font-size="12" fill="#777" text-anchor="end" textLength="33" lengthAdjust="spacing">Phase</text>
<text transform="translate(1039.1,917) rotate(-90)" font-size="12" fill="#777" text-anchor="end" textLength="43" lengthAdjust="spacing">Voltage</text>
<text transform="translate(1059.1,917) rotate(-90)" font-size="12" fill="#777" text-anchor="end" textLength="42.3" lengthAdjust="spacing">Current</text>
<text transform="translate(1079.1,917) rotate(-90)" font-size="12" fill="#777" text-anchor="end" textLength="33" lengthAdjust="spacing">Phase</text>
<text transform="translate(1099.1,917) rotate(-90)" font-size="12" fill="#777" text-anchor="end" textLength="43" lengthAdjust="spacing">Voltage</text>
<text transform="translate(1119.1,917) rotate(-90)" font-size="12" fill="#777" text-anchor="end" textLength="42.3" lengthAdjust="spacing">Current</text>
<text transform="translate(1139.1,917) rotate(-90)" font-size="12" fill="#777" text-anchor="end" textLength="33" lengthAdjust="spacing">Phase</text>
<text transform="translate(1159.1,917) rotate(-90)" font-size="12" fill="#777" text-anchor="end" textLength="43" lengthAdjust="spacing">Voltage</text>
<text transform="translate(1179.1,917) rotate(-90)" font-size="12" fill="#777" text-anchor="end" textLength="42.3" lengthAdjust="spacing">Current</text>
<text transform="translate(1199.1,917) rotate(-90)" font-size="12" fill="#777" text-anchor="end" textLength="33" lengthAdjust="spacing">Phase</text>
<text transform="translate(1219.1,917) rotate(-90)" font-size="12" fill="#777" text-anchor="end" textLength="43" lengthAdjust="spacing">Voltage</text>
<text transform="translate(1239.1,917) rotate(-90)" font-size="12" fill="#777" text-anchor="end" textLength="42.3" lengthAdjust="spacing">Current</text>
<text transform="translate(1259.1,917) rotate(-90)" font-size="12" fill="#777" text-anchor="end" textLength="33" lengthAdjust="spacing">Phase</text>
<text transform="translate(1279.1,917) rotate(-90)" font-size="12" fill="#777" text-anchor="end" textLength="43" lengthAdjust="spacing">Voltage</text>
<text transform="translate(1299.1,917) rotate(-90)" font-size="12" fill="#777" text-anchor="end" textLength="42.3" lengthAdjust="spacing">Current</text>
<text transform="translate(1319.1,917) rotate(-90)" font-size="12" fill="#777" text-anchor="end" textLength="33" lengthAdjust="spacing">Phase</text>
<text transform="translate(1339.1,917) rotate(-90)" font-size="12" fill="#777" text-anchor="end" textLength="43" lengthAdjust="spacing">Voltage</text>
<text transform="translate(1359.1,917) rotate(-90)" font-size="12" fill="#777" text-anchor="end" textLength="42.3" lengthAdjust="spacing">Current</text>
<text transform="translate(1379.1,917) rotate(-90)" font-size="12" fill="#777" text-anchor="end" textLength="33" lengthAdjust="spacing">Phase</text>
<text transform="translate(1399.1,917) rotate(-90)" font-size="12" fill="#777" text-anchor="end" textLength="43" lengthAdjust="spacing">Voltage</text>
<text transform="translate(1419.1,917) rotate(-90)" font-size="12" fill="#777" text-anchor="end" textLength="42.3" lengthAdjust="spacing">Current</text>
<text transform="translate(1439.1,917) rotate(-90)" font-size="12" fill="#777" text-anchor="end" textLength="33" lengthAdjust="spacing">Phase</text>
<text transform="translate(1459.1,917) rotate(-90)" font-size="12" fill="#777" text-anchor="end" textLength="43" lengthAdjust="spacing">Voltage</text>
<text transform="translate(1479.1,917) rotate(-90)" font-size="12" fill="#777" text-anchor="end" textLength="42.3" lengthAdjust="spacing">Current</text>
<text transform="translate(1499.1,917) rotate(-90)" font-size="12" fill="#777" text-anchor="end" textLength="33" lengthAdjust="spacing">Phase</text>
<text transform="translate(1519.1,917) rotate(-90)" font-size="12" fill="#777" text-anchor="end" textLength="43" lengthAdjust="spacing">Voltage</text>
</g></svg>
<div class="abs" style="left:0;top:988px;width:1630px;height:26px;background:#e6e6e6;border-top:1px solid #cfcfcf"></div>
<div class="abs" style="left:130px;top:989px;width:58px;height:25px;background:#f9f9f9;border-right:1px solid #d0d0d0;border-left:1px solid #d8d8d8"></div>
<div class="abs" style="left:219px;top:989px;width:1px;height:25px;background:#d0d0d0"></div>
<div class="abs" style="left:251px;top:989px;width:1px;height:25px;background:#d0d0d0"></div>
<div class="abs" style="left:283px;top:989px;width:1px;height:25px;background:#d0d0d0"></div>
<svg class="abs" style="left:6px;top:994px" width="14" height="16"><path d="M2 3.5 C2 1.3 10 1.3 10 3.5 V12 C10 14.2 2 14.2 2 12 Z M2 3.8 C2 5.7 10 5.7 10 3.8" fill="none" stroke="#666" stroke-width="1.1"/></svg>
<div class="t" style="left:23px;top:997.5px;font-size:12.5px;color:#666">Data Source</div>
<div class="t" style="left:137px;top:996.5px;font-size:12.5px;font-weight:bold;color:#585858">Sheet 1</div>
<svg class="abs" style="left:180px;top:985px" width="120" height="29" viewBox="180 985 120 29"><g fill="none" stroke="#606060" stroke-width="1.1"><rect x="197.5" y="997.3" width="10.5" height="10.2" rx="1.2"/><rect x="229.5" y="997.3" width="10.2" height="10.2" rx="1.2"/><path d="M234.6 997.5 V1007.3 M229.7 1002.3 H239.5"/><path d="M261.3 997.6 L266.3 999.5 L271.8 997.3 V1006.5 L266.3 1008.6 L261.3 1006.8 Z M266.3 999.5 V1008.4"/></g><path d="M200.8 1004.3 V1002.6 M202.8 1004.3 V1000.6 M204.8 1004.3 V1001.4" stroke="#555" stroke-width="1.2"/><rect x="203.3" y="1002.8" width="10" height="10" fill="#e6e6e6"/><path d="M208.3 1004 V1011.8 M204.4 1007.9 H212.20000000000002" stroke="#555" stroke-width="1.6"/><rect x="235.2" y="1002.8" width="10" height="10" fill="#e6e6e6"/><path d="M240.2 1004 V1011.8 M236.29999999999998 1007.9 H244.1" stroke="#555" stroke-width="1.6"/><rect x="267.2" y="1002.8" width="10" height="10" fill="#e6e6e6"/><path d="M272.2 1004 V1011.8 M268.3 1007.9 H276.09999999999997" stroke="#555" stroke-width="1.6"/></svg>
</body></html>
